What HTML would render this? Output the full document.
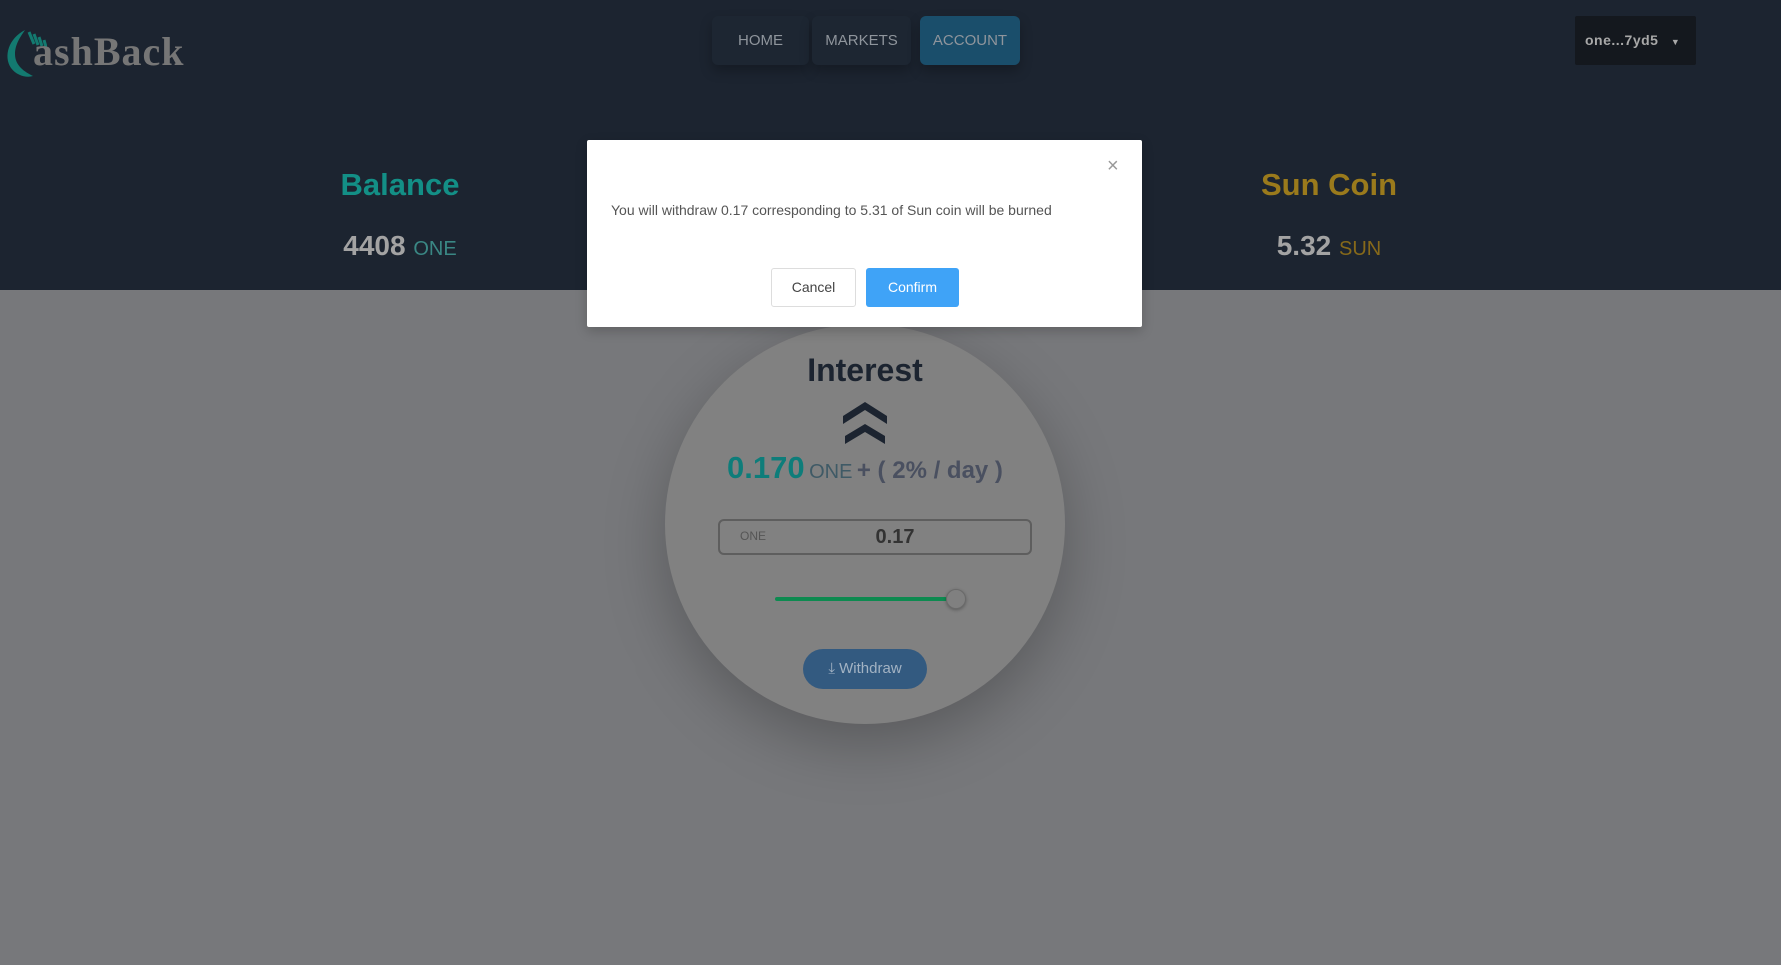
<!DOCTYPE html>
<html><head><meta charset="utf-8"><style>
*{margin:0;padding:0;box-sizing:border-box}
body{width:1781px;height:965px;overflow:hidden;background:#77787b;font-family:"Liberation Sans",sans-serif;position:relative}
.hdr{position:absolute;left:0;top:0;width:1781px;height:290px;background:#1c2430}
.abs{position:absolute}
.nav{position:absolute;top:16px;height:49px;border-radius:6px;color:#8f959c;font-size:15px;display:flex;align-items:center;justify-content:center;background:#1d2632;box-shadow:0 6px 12px rgba(0,0,0,.25)}
.circle{position:absolute;left:665px;top:324px;width:400px;height:400px;border-radius:50%;background:#818181;box-shadow:0 20px 60px rgba(0,0,0,.25)}
</style></head><body>
<div class="hdr"></div>
<svg class="abs" style="left:3px;top:26px" width="44" height="52" viewBox="0 0 44 52"><path d="M22 4 C6 12 0 30 8 42 C14 50 24 52 30 50 C22 46 12 40 12 28 C12 18 18 10 22 4Z" fill="#137a70"/><path d="M26 6 l5 12 M31 8 l4 11 M36 11 l3 9 M41 14 l2 7" stroke="#137a70" stroke-width="3"/></svg>
<div class="abs" style="left:33px;top:28px;font-family:'Liberation Serif',serif;font-weight:bold;font-size:40px;color:#767676;letter-spacing:1px">ashBack</div>
<div class="nav" style="left:712px;width:97px">HOME</div>
<div class="nav" style="left:812px;width:99px">MARKETS</div>
<div class="nav" style="left:920px;width:100px;background:#1a4e6b">ACCOUNT</div>
<div class="abs" style="left:1575px;top:16px;width:121px;height:49px;background:#14181e;border-radius:2px;color:#a8a8a8;font-family:'Liberation Sans',sans-serif;font-weight:bold;font-size:14px;line-height:49px;padding-left:10px;letter-spacing:.5px">one...7yd5 <span style="font-size:9px;margin-left:8px">▼</span></div>
<div class="abs" style="left:300px;width:200px;top:167px;text-align:center;color:#138f86;font-weight:bold;font-size:31px">Balance</div>
<div class="abs" style="left:300px;width:200px;top:230px;text-align:center;color:#a3a3a3;font-weight:bold;font-size:28px">4408 <span style="font-weight:normal;font-size:20px;color:#3a8784">ONE</span></div>
<div class="abs" style="left:1229px;width:200px;top:167px;text-align:center;color:#9a7a1c;font-weight:bold;font-size:31px">Sun Coin</div>
<div class="abs" style="left:1229px;width:200px;top:230px;text-align:center;color:#a3a3a3;font-weight:bold;font-size:28px">5.32 <span style="font-weight:normal;font-size:20px;color:#86691a">SUN</span></div>
<div class="circle"></div>
<div class="abs" style="left:665px;width:400px;top:352px;text-align:center;color:#1c2430;font-weight:bold;font-size:32px">Interest</div>
<svg class="abs" style="left:843px;top:402px" width="44" height="42" viewBox="0 0 44 42"><path d="M0 14 L22 0 L44 14 L44 22 L22 8 L0 22Z M2 34 L22 22 L42 34 L42 42 L22 30 L2 42Z" fill="#1c2430"/></svg>
<div class="abs" style="left:665px;width:400px;top:450px;text-align:center;white-space:nowrap"><span style="color:#0e7d7a;font-weight:bold;font-size:31px">0.170</span> <span style="color:#3f5a66;font-size:20px">ONE</span> <span style="color:#4a5060;font-weight:bold;font-size:24px">+ ( 2% / day )</span></div>
<div class="abs" style="left:718px;top:519px;width:314px;height:36px;border:2px solid #5e5e5e;border-radius:6px"></div>
<div class="abs" style="left:740px;top:529px;font-size:12px;color:#555">ONE</div>
<div class="abs" style="left:860px;width:70px;top:526px;text-align:center;font-size:20px;font-weight:bold;color:#333">0.17</div>
<div class="abs" style="left:775px;top:597px;width:172px;height:4px;background:#0d8a50;border-radius:2px"></div>
<div class="abs" style="left:946px;top:589px;width:20px;height:20px;border-radius:50%;background:#808080;border:1px solid #6a6a6a;box-shadow:0 1px 3px rgba(0,0,0,.3)"></div>
<div class="abs" style="left:803px;top:649px;width:124px;height:40px;border-radius:20px;background:#335a80;color:#a3b3c3;font-size:15px;line-height:40px;text-align:center">⤓ Withdraw</div>
<div class="abs" style="left:587px;top:140px;width:555px;height:187px;background:#fff;border-radius:2px;box-shadow:0 4px 12px rgba(0,0,0,.2)"></div>
<div class="abs" style="left:1107px;top:155px;font-size:20px;color:#999">×</div>
<div class="abs" style="left:611px;top:202px;font-size:14px;color:#555">You will withdraw 0.17 corresponding to 5.31 of Sun coin will be burned</div>
<div class="abs" style="left:771px;top:268px;width:85px;height:39px;border:1px solid #ddd;border-radius:3px;background:#fff;color:#444;font-size:14px;line-height:37px;text-align:center">Cancel</div>
<div class="abs" style="left:866px;top:268px;width:93px;height:39px;border-radius:3px;background:#3fa3f7;color:#fff;font-size:14px;line-height:39px;text-align:center">Confirm</div>
</body></html>
